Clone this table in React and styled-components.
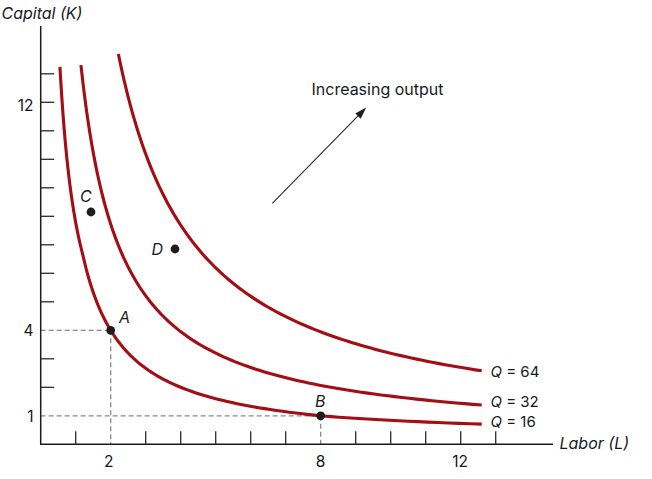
import React from "react";
import styled, { createGlobalStyle } from "styled-components";

const GlobalStyle = createGlobalStyle`
  html, body {
    margin: 0;
    padding: 0;
    background: #ffffff;
  }
`;

const Page = styled.div`
  width: 652px;
  height: 479px;
  background: #ffffff;
  overflow: hidden;
`;

const Chart = styled.svg`
  display: block;
  width: 652px;
  height: 479px;
  font-family: Inter, "Liberation Sans", Arial, sans-serif;
`;

const AxisLine = styled.line`
  stroke: #1b1b1b;
  stroke-width: 1.5;
`;

const Tick = styled.line`
  stroke: #2a2a2a;
  stroke-width: 1.3;
`;

const Guide = styled.line`
  stroke: #8a8a8a;
  stroke-width: 1.3;
  stroke-dasharray: 5 3;
`;

const Curve = styled.path`
  fill: none;
  stroke: #a30d14;
  stroke-width: 3.1;
`;

const Dot = styled.circle`
  fill: #1d1d1d;
`;

const Pointer = styled.line`
  stroke: #2b2b2b;
  stroke-width: 1.1;
`;

const PointerHead = styled.polygon`
  fill: #1f1f1f;
`;

const Label = styled.text`
  fill: #161a26;
  font-size: ${(p) => p.$size || 15}px;
  font-style: ${(p) => (p.$italic ? "italic" : "normal")};
  text-anchor: ${(p) => p.$anchor || "start"};
`;

// data -> pixels
const x0 = 40.7;
const y0 = 444.3;
const px = (L) => x0 + 35 * L;
const py = (K) => y0 - 28.5 * K;

// each isoquant is roughly K = c / L, c drifts a little along the curve
const isoquants = [
  { name: "16", from: 0.55, c: (L) => 8 + Math.max(0, L - 8) * 0.2 - Math.max(0, 1.2 - L) * 1.1 },
  { name: "32", from: 1.15, c: (L) => 15.3 + (L - 1.15) * 0.18 },
  { name: "64", from: 2.22, c: (L) => 30.4 + (L - 2.2) * 0.2 },
];

const curvePath = ({ from, c }) => {
  const end = 12.6;
  const steps = 120;
  let d = "";
  for (let i = 0; i <= steps; i++) {
    const L = from * Math.pow(end / from, i / steps);
    const K = c(L) / L;
    d += `${i === 0 ? "M" : "L"}${px(L).toFixed(2)},${py(K).toFixed(2)} `;
  }
  return d;
};

const xTicks = [1, 3, 4, 5, 6, 7, 9, 10, 11, 12, 13];
const yTicks = [2, 3, 5, 6, 7, 8, 9, 10, 11, 12, 13];

const points = [
  { id: "A", L: 2, K: 4, lx: 119, ly: 323 },
  { id: "B", L: 8, K: 1, lx: 315, ly: 407 },
  { id: "C", x: 91, y: 212, lx: 80, ly: 202 },
  { id: "D", x: 175, y: 249, lx: 151.5, ly: 255 },
];

const App = () => {
  return (
    <Page>
      <GlobalStyle />
      <Chart viewBox="0 0 652 479">
        <Label x={1.5} y={18.5} $size={16} $italic>
          Capital (K)
        </Label>

        {/* guides to A and B */}
        <Guide x1={x0} y1={py(4)} x2={px(2)} y2={py(4)} />
        <Guide x1={px(2)} y1={py(4)} x2={px(2)} y2={y0} />
        <Guide x1={x0} y1={py(1)} x2={px(8)} y2={py(1)} />
        <Guide x1={px(8)} y1={py(1)} x2={px(8)} y2={y0} />

        {/* axes */}
        <AxisLine x1={x0} y1={26} x2={x0} y2={y0} />
        <AxisLine x1={x0 - 0.7} y1={y0} x2={553} y2={y0} />

        {yTicks.map((k) => (
          <Tick key={`y${k}`} x1={x0} y1={py(k)} x2={x0 + 13.5} y2={py(k)} />
        ))}
        {xTicks.map((l) => (
          <Tick key={`x${l}`} x1={px(l)} y1={y0} x2={px(l)} y2={y0 - 13} />
        ))}

        <Label x={33.5} y={110.7} $size={15.5} $anchor="end">12</Label>
        <Label x={33.5} y={336.2} $size={15.5} $anchor="end">4</Label>
        <Label x={33.5} y={422} $size={15.5} $anchor="end">1</Label>
        <Label x={108.7} y={466.7} $size={15.5} $anchor="middle">2</Label>
        <Label x={320.6} y={466.7} $size={15.5} $anchor="middle">8</Label>
        <Label x={460.2} y={466.7} $size={15.5} $anchor="middle">12</Label>

        <Label x={559.5} y={449.2} $size={16} $italic>
          Labor (L)
        </Label>

        {isoquants.map((q) => (
          <Curve key={q.name} d={curvePath(q)} />
        ))}

        <Label x={490.5} y={376.7}>
          <tspan fontStyle="italic">Q</tspan> = 64
        </Label>
        <Label x={490.5} y={407}>
          <tspan fontStyle="italic">Q</tspan> = 32
        </Label>
        <Label x={490.5} y={427.3}>
          <tspan fontStyle="italic">Q</tspan> = 16
        </Label>

        {points.map((p) => {
          const cx = p.x ?? px(p.L);
          const cy = p.y ?? py(p.K);
          return (
            <g key={p.id}>
              <Dot cx={cx} cy={cy} r={4.4} />
              <Label x={p.lx} y={p.ly} $size={16} $italic>
                {p.id}
              </Label>
            </g>
          );
        })}

        <Pointer x1={272.3} y1={203.3} x2={360} y2={113.8} />
        <PointerHead points="366.2,107.6 355.3,113.4 360.7,118.7" />
        <Label x={311.5} y={95} $size={16}>
          Increasing output
        </Label>
      </Chart>
    </Page>
  );
};

export default App;
